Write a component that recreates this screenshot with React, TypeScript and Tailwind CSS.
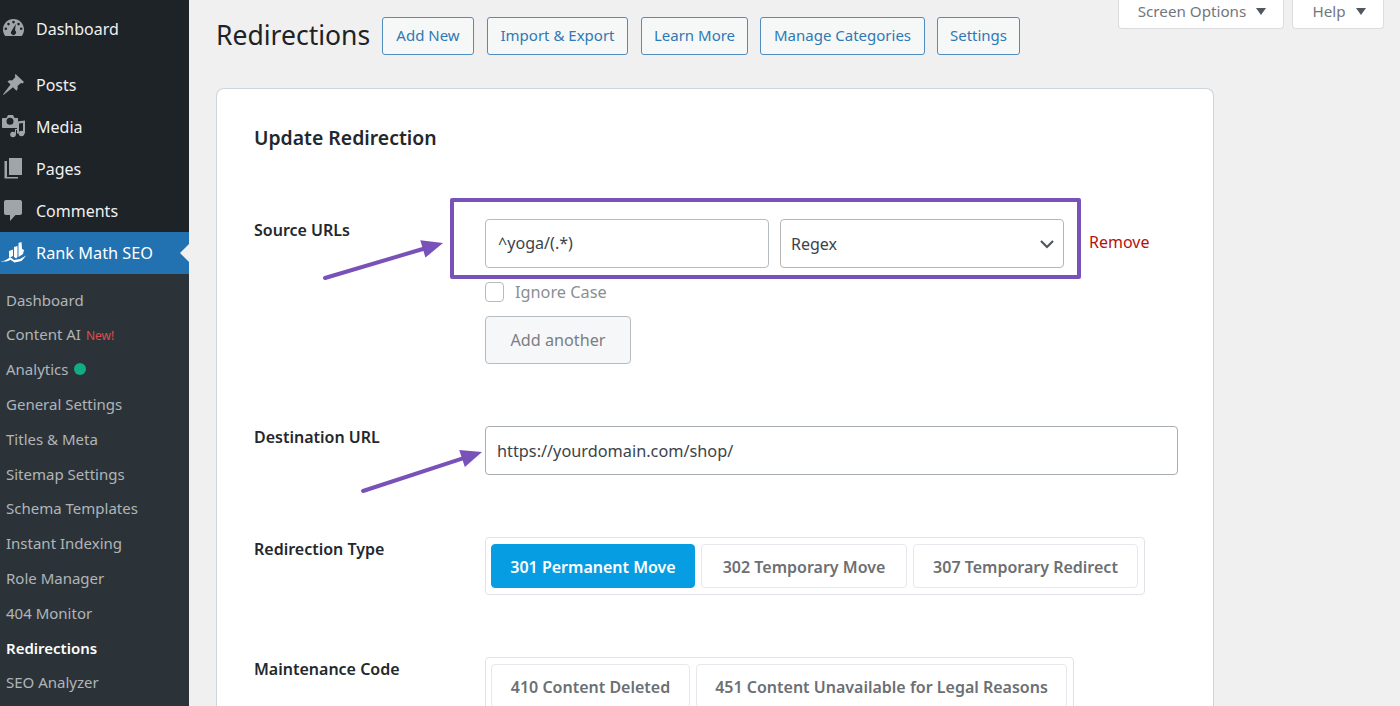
const font = '[font-family:"Noto_Sans","Open_Sans",sans-serif]';

const topItems = [
  { label: 'Posts', icon: <PinIcon /> },
  { label: 'Media', icon: <MediaIcon /> },
  { label: 'Pages', icon: <PagesIcon /> },
  { label: 'Comments', icon: <CommentIcon /> },
];

const subItems = [
  'General Settings',
  'Titles & Meta',
  'Sitemap Settings',
  'Schema Templates',
  'Instant Indexing',
  'Role Manager',
  '404 Monitor',
];

const headerButtons = [
  { label: 'Add New', size: 'w-[92px]' },
  { label: 'Import & Export', size: 'ml-[13px] w-[141px]' },
  { label: 'Learn More', size: 'ml-[13px] w-[107px]' },
  { label: 'Manage Categories', size: 'ml-[12px] w-[165px]' },
  { label: 'Settings', size: 'ml-[12px] w-[83px]' },
];

// sidebar icons share a 34px box so they line up in the 36px icon column
function GaugeIcon() {
  return (
    <svg viewBox="0 0 34 34" className="h-[34px] w-[34px]" fill="#a0a5aa">
      <path
        fillRule="evenodd"
        d="M13.5 7C7.700 7 3 11.700 3 17.500c0 2.500.8 4.800 2.200 6.500h16.600c1.400-1.700 2.200-4 2.200-6.500C24 11.700 19.300 7 13.500 7zM13.500 8.800a1.300 1.300 0 1 1 0 2.600 1.300 1.300 0 0 1 0-2.600zM8.500 10.800a1.300 1.300 0 1 1 0 2.600 1.300 1.300 0 0 1 0-2.600zM18.500 10.800a1.300 1.300 0 1 1 0 2.600 1.300 1.300 0 0 1 0-2.600zM5.800 15.500a1.300 1.300 0 1 1 0 2.600 1.300 1.300 0 0 1 0-2.600zM21.200 15.500a1.300 1.300 0 1 1 0 2.600 1.300 1.300 0 0 1 0-2.600zM15.800 12l-.8 6.500a2.500 2.500 0 1 1-3.400.4z"
      />
    </svg>
  );
}

function PinIcon() {
  return (
    <svg viewBox="0 0 34 34" className="h-[34px] w-[34px]" fill="#a0a5aa">
      <path d="M15.500 6L24 14l-1.500 1.500-1.500-.6-3.500 3.200c.5 2 .1 3.500-1 4.700l-3.500-3.500L3.500 27 3 26.500l7.500-10-3-3c1.200-1.100 2.800-1.500 4.700-1l3.200-3.500-.6-1.500z" />
    </svg>
  );
}

function MediaIcon() {
  return (
    <svg viewBox="0 0 34 34" className="h-[34px] w-[34px]" fill="#a0a5aa">
      <path
        fillRule="evenodd"
        d="M3 8h3.500l1.500-3h5l1.500 3H18v10H3c-.6 0-1-.4-1-1V9c0-.6.4-1 1-1zM10 7.800a3.500 3.500 0 1 0 0 7 3.500 3.500 0 0 0 0-7z"
      />
      <circle cx="13" cy="24.500" r="2.800" />
      <circle cx="21.500" cy="23.500" r="2.800" />
      <path d="M15 24.500V19h2V11.500l8-1v13h-2V13l-4 .5v10h-2V20h-1v4.500z" />
    </svg>
  );
}

function PagesIcon() {
  return (
    <svg viewBox="0 0 34 34" className="h-[34px] w-[34px]" fill="#a0a5aa">
      <path d="M9 6h13v17H9z" />
      <path d="M7 9v16h11v1.500H4.500V9z" />
    </svg>
  );
}

function CommentIcon() {
  return (
    <svg viewBox="0 0 34 34" className="h-[34px] w-[34px]" fill="#a0a5aa">
      <path d="M6 6h14c1.200 0 2 .8 2 2v11c0 1.200-.8 2-2 2h-4.500L10 27v-6H6c-1.200 0-2-.8-2-2V8c0-1.200.8-2 2-2z" />
    </svg>
  );
}

function RankMathIcon() {
  return (
    <svg viewBox="0 0 34 34" className="h-[34px] w-[34px]" fill="#ffffff">
      <path d="M1.500 25.500c3.500-.5 6.500-2.500 8.500-4.500l4 3 6-1 6-3.500c-1.500 2-2.500 3.500-4.500 5.500l-7 1.500-4-2.800c-2.500 1.600-5.500 2.600-9 1.300z" />
      <path d="M9 15l4-1.500v6.500l-3 1.500-1-.2zM14 11l3.500-1v11l-1.500 1.500-2-1.500zM18.500 9.500V7l3-1 .5 7 2 1-1 4-4.500 3z" />
    </svg>
  );
}

function TopItem({ label, icon }: { label: string; icon: React.ReactNode }) {
  return (
    <div className="flex h-[42px] items-center text-[16px] text-[#f0f0f1]">
      <span className="flex w-[36px] shrink-0">{icon}</span>
      {label}
    </div>
  );
}

function SubItem({ children, active }: { children: React.ReactNode; active?: boolean }) {
  return (
    <div
      className={`flex h-[34.800px] items-center pl-[6px] text-[15px] ${
        active ? 'font-semibold text-white' : 'text-[#b0b5ba]'
      }`}
    >
      {children}
    </div>
  );
}

function Sidebar() {
  return (
    <aside className="w-[189px] shrink-0 bg-[#1d2327]">
      <div className="flex h-[64px] flex-col justify-center pb-[6px]">
        <TopItem label="Dashboard" icon={<GaugeIcon />} />
      </div>
      {topItems.map((item) => (
        <TopItem key={item.label} label={item.label} icon={item.icon} />
      ))}
      <div className="relative flex h-[42px] items-center bg-[#2271b1] text-[16.300px] text-white">
        <span className="flex w-[36px] shrink-0">
          <RankMathIcon />
        </span>
        Rank Math SEO
        <span className="absolute right-0 top-[12px] h-0 w-0 border-y-[9px] border-r-[9px] border-y-transparent border-r-[#f0f0f1]" />
      </div>
      <div className="bg-[#2c3338] pt-[8.500px] pb-[20px]">
        <SubItem>Dashboard</SubItem>
        <SubItem>
          Content AI
          <span className="ml-[5px] mt-[2px] text-[12px] text-[#e04b4b]">New!</span>
        </SubItem>
        <SubItem>
          Analytics
          <span className="ml-[6px] h-[12px] w-[12px] rounded-full bg-[#10ac84]" />
        </SubItem>
        {subItems.map((label) => (
          <SubItem key={label}>{label}</SubItem>
        ))}
        <SubItem active>Redirections</SubItem>
        <SubItem>SEO Analyzer</SubItem>
      </div>
    </aside>
  );
}

function ToggleButton({ label, width, active }: { label: string; width: string; active?: boolean }) {
  return (
    <div
      className={`flex h-[44px] items-center justify-center rounded-[4px] border pt-[1px] text-[16px] font-semibold ${width} ${
        active
          ? 'border-[#069de3] bg-[#069de3] text-white'
          : 'border-[#e5e8ec] bg-white text-[#6c6f73]'
      }`}
    >
      {label}
    </div>
  );
}

function FormRow({
  label,
  labelOffset,
  children,
  className,
}: {
  label: string;
  labelOffset: string;
  children: React.ReactNode;
  className?: string;
}) {
  return (
    <div className={`flex ${className ?? ''}`}>
      <div className={`w-[231px] shrink-0 text-[16px] font-semibold text-[#23282d] ${labelOffset}`}>{label}</div>
      <div>{children}</div>
    </div>
  );
}

function Arrow({ className, x2, y2, w, h }: { className: string; x2: number; y2: number; w: number; h: number }) {
  const angle = Math.atan2(y2 - (h - 3), x2 - 3);
  const back = 21;
  const spread = 9;
  const bx = x2 - back * Math.cos(angle);
  const by = y2 - back * Math.sin(angle);
  const nx = -Math.sin(angle) * spread;
  const ny = Math.cos(angle) * spread;
  return (
    <svg className={`absolute ${className}`} width={w} height={h} viewBox={`0 0 ${w} ${h}`}>
      <line x1={3} y1={h - 3} x2={bx} y2={by} stroke="#7952b9" strokeWidth={4} strokeLinecap="round" />
      <polygon points={`${x2},${y2} ${bx + nx},${by + ny} ${bx - nx},${by - ny}`} fill="#7952b9" />
    </svg>
  );
}

function Card() {
  return (
    <section className="mt-[33px] h-[700px] w-[998px] rounded-t-[8px] border border-b-0 border-[#ccd5de] bg-white px-[37px]">
      <h2 className="mt-[35px] text-[19.400px] leading-[28px] font-semibold text-[#23282d]">Update Redirection</h2>

      <FormRow label="Source URLs" labelOffset="-mt-[1px]" className="mt-[67px]">
        <div className="flex items-center">
          <div className="flex h-[49px] w-[284px] items-center rounded-[4px] border border-[#b5bcc2] px-[12px] text-[16.100px] text-[#3c434a]">
            ^yoga/(.*)
          </div>
          <div className="ml-[11px] flex h-[49px] w-[284px] items-center justify-between rounded-[4px] border border-[#b5b5b5] pl-[10px] pr-[8px] text-[16px] text-[#3c434a]">
            Regex
            <svg viewBox="0 0 16 16" className="h-[16px] w-[16px]" fill="none" stroke="#50575e" strokeWidth="2.200">
              <path d="M2 5l6 6 6-6" />
            </svg>
          </div>
          <span className="ml-[25px] -mt-[3px] text-[16px] text-[#b3130f]">Remove</span>
        </div>
        <div className="mt-[14px] flex items-center">
          <span className="h-[20px] w-[19px] rounded-[4px] border border-[#b5bcc2]" />
          <span className="ml-[11px] text-[16.300px] leading-[20px] text-[#8a8f94]">Ignore Case</span>
        </div>
        <div className="mt-[14px] flex h-[48px] w-[146px] items-center justify-center rounded-[4px] border border-[#b5bcc2] bg-[#f6f7f9] text-[16.200px] text-[#7a7e83]">
          Add another
        </div>
      </FormRow>

      <FormRow label="Destination URL" labelOffset="-mt-[1px]" className="mt-[62px]">
        <div className="flex h-[49px] w-[693px] items-center rounded-[4px] border border-[#a7adb3] px-[11px] pt-[1px] text-[16.300px] text-[#3c434a]">
          https://yourdomain.com/shop/
        </div>
      </FormRow>

      <FormRow label="Redirection Type" labelOffset="" className="mt-[62px]">
        <div className="flex h-[58px] w-[660px] items-center gap-[6px] rounded-[4px] border border-[#dfe3e8] px-[5px]">
          <ToggleButton label="301 Permanent Move" width="w-[204px]" active />
          <ToggleButton label="302 Temporary Move" width="w-[206px]" />
          <ToggleButton label="307 Temporary Redirect" width="w-[225px]" />
        </div>
      </FormRow>

      <FormRow label="Maintenance Code" labelOffset="" className="mt-[62px]">
        <div className="flex h-[58px] w-[589px] items-center gap-[6px] rounded-[4px] border border-[#dfe3e8] px-[5px]">
          <ToggleButton label="410 Content Deleted" width="w-[199px]" />
          <ToggleButton label="451 Content Unavailable for Legal Reasons" width="w-[371px]" />
        </div>
      </FormRow>
    </section>
  );
}

export default function App() {
  return (
    <div className={`relative flex h-[706px] w-[1400px] overflow-hidden bg-[#f0f0f1] ${font}`}>
      <Sidebar />
      <main className="relative flex-1 pl-[27px]">
        <div className="absolute right-[16px] top-0 flex gap-[8px]">
          <div className="flex h-[29px] w-[166px] items-center justify-center gap-[10px] rounded-b-[4px] border border-t-0 border-[#dcdcde] bg-white pb-[5px] pl-[2px] text-[15.200px] text-[#72777c]">
            Screen Options
            <span className="h-0 w-0 border-x-[5px] border-t-[7px] border-x-transparent border-t-[#50575e]" />
          </div>
          <div className="flex h-[29px] w-[92px] items-center justify-center gap-[10px] rounded-b-[4px] border border-t-0 border-[#dcdcde] bg-white pb-[5px] pl-[2px] text-[15.200px] text-[#72777c]">
            Help
            <span className="h-0 w-0 border-x-[5px] border-t-[7px] border-x-transparent border-t-[#50575e]" />
          </div>
        </div>

        <div className="flex items-center pt-[17px]">
          <h1 className="-mt-[2px] w-[166px] shrink-0 text-[26.500px] leading-[38px] text-[#1d2327]">Redirections</h1>
          <div className="flex">
            {headerButtons.map((button) => (
              <div
                key={button.label}
                className={`flex h-[38px] items-center justify-center rounded-[3px] border border-[#4f8dbf] bg-[#f6f7f7] pb-[1px] text-[15px] text-[#2f79b5] ${button.size}`}
              >
                {button.label}
              </div>
            ))}
          </div>
        </div>

        <Card />
      </main>

      {/* annotations drawn over the form */}
      <div className="absolute left-[450px] top-[198px] h-[81px] w-[631px] rounded-[2px] border-[4px] border-[#7952b9]" />
      <Arrow className="left-[322px] top-[238px]" x2={121} y2={5} w={124} h={43} />
      <Arrow className="left-[360px] top-[448px]" x2={122} y2={4} w={124} h={46} />
    </div>
  );
}
